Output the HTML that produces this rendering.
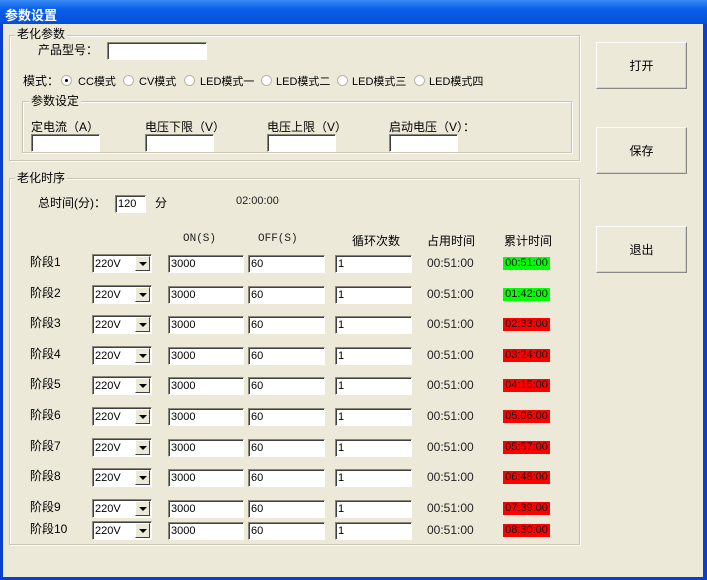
<!DOCTYPE html><html><head><meta charset="utf-8"><style>
*{margin:0;padding:0;box-sizing:border-box}
body{width:707px;height:580px;position:relative;overflow:hidden;background:#0a3fd0;font-family:"Liberation Sans","Noto Sans CJK SC","WenQuanYi Zen Hei",sans-serif;font-size:12px;color:#000}
.a{position:absolute}
#title{left:0;top:0;width:707px;height:24px;background:linear-gradient(#3a8cf8,#0a5ee8 40%,#0550d8);color:#fff;font-weight:bold;font-size:13px;padding:5px 0 0 5px}
#client{left:3px;top:24px;width:700px;height:553px;background:#ECE9D8}
.fs{position:absolute;border:1px solid #c8c5b4;box-shadow:1px 1px 0 #fff inset,1px 1px 0 #fff}
.lg{position:absolute;background:#ECE9D8;padding:0 2px;font-size:12px;line-height:14px}
.in{position:absolute;height:18px;background:#fff;border:1px solid;border-color:#8a877a #fff #fff #8a877a;box-shadow:1px 1px 0 #404040 inset;font-size:11px;padding:2px 0 0 2px;line-height:13px}
.cb{position:absolute;width:60px;height:19px;background:#fff;border:1px solid;border-color:#8a877a #fff #fff #8a877a;box-shadow:1px 1px 0 #404040 inset;font-size:11px;padding:3px 0 0 2px}
.cb i{position:absolute;right:1px;top:1px;width:15px;height:15px;background:#ECE9D8;border:1px solid;border-color:#fff #404040 #404040 #fff}
.cb i:after{content:"";position:absolute;left:3px;top:5px;border:4px solid transparent;border-top:4px solid #000;border-bottom:0}
.t{position:absolute;font-size:12px;font-family:"Liberation Sans",sans-serif;color:#222}
.ct{position:absolute;width:47px;height:13px;font-size:11px;line-height:13px;text-align:center;font-family:"Liberation Sans",sans-serif;color:#111}
.g{background:#00ff00}.r{background:#ff0000}
.btn{position:absolute;left:596px;width:91px;height:47px;border:1px solid;border-color:#fff #888 #888 #fff;box-shadow:-1px -1px 0 #d4d0c8 inset;text-align:center;line-height:46px;font-size:12px}
.rd{position:absolute;width:11px;height:11px;border-radius:50%;background:#fff;border:1px solid #b8b4a4}
.lb{position:absolute;font-size:12px;white-space:nowrap}
</style></head><body>
<div class="a" id="title">参数设置</div>
<div class="a" id="client"></div>
<div class="fs" style="left:9px;top:35px;width:571px;height:126px"></div>
<div class="lg" style="left:15px;top:27px">老化参数</div>
<div class="lb" style="left:38px;top:41px">产品型号：</div>
<div class="in" style="left:107px;top:42px;width:100px"></div>
<div class="lb" style="left:23px;top:72px">模式：</div>
<div class="rd" style="left:61px;top:75px"></div><div class="a" style="left:65px;top:79px;width:3px;height:3px;background:#000;border-radius:50%"></div>
<div class="lb" style="left:78px;top:73px;font-size:11px">CC模式</div>
<div class="rd" style="left:123px;top:75px"></div><div class="lb" style="left:139px;top:73px;font-size:11px">CV模式</div>
<div class="rd" style="left:184px;top:75px"></div><div class="lb" style="left:200px;top:73px;font-size:11px">LED模式一</div>
<div class="rd" style="left:261px;top:75px"></div><div class="lb" style="left:276px;top:73px;font-size:11px">LED模式二</div>
<div class="rd" style="left:337px;top:75px"></div><div class="lb" style="left:352px;top:73px;font-size:11px">LED模式三</div>
<div class="rd" style="left:414px;top:75px"></div><div class="lb" style="left:429px;top:73px;font-size:11px">LED模式四</div>
<div class="fs" style="left:22px;top:101px;width:550px;height:52px"></div>
<div class="lg" style="left:29px;top:94px">参数设定</div>
<div class="lb" style="left:31px;top:118px">定电流（A）</div>
<div class="lb" style="left:145px;top:118px">电压下限（V）</div>
<div class="lb" style="left:267px;top:118px">电压上限（V）</div>
<div class="lb" style="left:389px;top:118px">启动电压（V）：</div>
<div class="in" style="left:31px;top:134px;width:69px"></div>
<div class="in" style="left:145px;top:134px;width:69px"></div>
<div class="in" style="left:267px;top:134px;width:69px"></div>
<div class="in" style="left:389px;top:134px;width:69px"></div>
<div class="fs" style="left:9px;top:178px;width:571px;height:367px"></div>
<div class="lg" style="left:15px;top:171px">老化时序</div>
<div class="lb" style="left:38px;top:194px">总时间(分)：</div>
<div class="in" style="left:115px;top:195px;width:31px;font-size:11px">120</div>
<div class="lb" style="left:155px;top:194px">分</div>
<div class="t" style="left:236px;top:195px;font-size:11px">02:00:00</div>
<div class="t" style="left:183px;top:233px;font-family:'Liberation Mono',monospace;font-size:11px">ON(S)</div>
<div class="t" style="left:258px;top:233px;font-family:'Liberation Mono',monospace;font-size:11px">OFF(S)</div>
<div class="lb" style="left:352px;top:232px">循环次数</div>
<div class="lb" style="left:427px;top:232px">占用时间</div>
<div class="lb" style="left:504px;top:232px">累计时间</div>
<div class="btn" style="top:42px">打开</div>
<div class="btn" style="top:127px">保存</div>
<div class="btn" style="top:226px">退出</div>
<div id="rows"></div>
<script>
var cs=[263,294,324,355,385,416,447,477,508,530],ct=["00:51:00","01:42:00","02:33:00","03:24:00","04:15:00","05:06:00","05:57:00","06:48:00","07:39:00","08:30:00"],h="";
cs.forEach(function(c,i){var t=c-8;
h+='<div class="lb" style="left:30px;top:'+(c-10)+'px">阶段'+(i+1)+'</div>';
h+='<div class="cb" style="left:92px;top:'+(t-1)+'px">220V<i></i></div>';
h+='<div class="in" style="left:168px;top:'+t+'px;width:76px">3000</div>';
h+='<div class="in" style="left:248px;top:'+t+'px;width:77px">60</div>';
h+='<div class="in" style="left:335px;top:'+t+'px;width:77px">1</div>';
h+='<div class="t" style="left:427px;top:'+(c-7)+'px">00:51:00</div>';
h+='<div class="ct '+(i<2?'g':'r')+'" style="left:503px;top:'+(c-6)+'px">'+ct[i]+'</div>';});
document.getElementById("rows").innerHTML=h;
</script>
</body></html>
